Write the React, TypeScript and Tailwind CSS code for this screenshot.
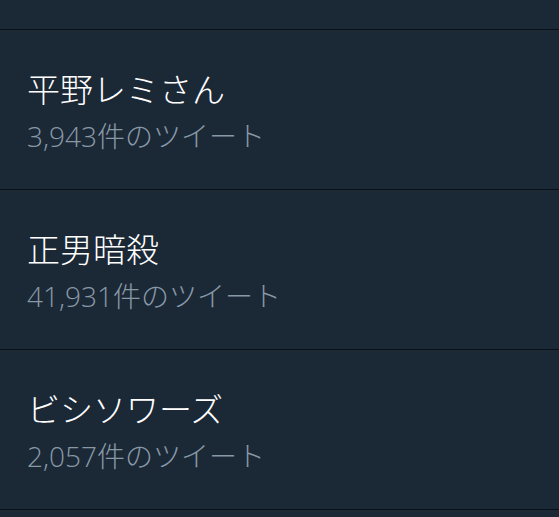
import React from 'react';

interface TrendItem {
  name: string;
  count: string;
}

const trends: TrendItem[] = [
  { name: '平野レミさん', count: '3,943件のツイート' },
  { name: '正男暗殺', count: '41,931件のツイート' },
  { name: 'ビシソワーズ', count: '2,057件のツイート' },
];

const App = () => {
  return (
    <div
      className="w-[559px] h-[517px] overflow-hidden bg-[#1b2836]"
      style={{ fontFamily: '"Noto Sans CJK JP", "Noto Sans", sans-serif' }}
    >
      {/* tail of the previous row */}
      <div className="h-[30px] border-b border-[#0b1117]" />
      {trends.map((t) => (
        <div
          key={t.name}
          className="h-[160px] border-b border-[#0b1117] flex flex-col pt-[38px] pl-[27px]"
        >
          <p className="text-[33px] leading-[40px] font-light text-white">{t.name}</p>
          <p
            className="text-[28px] leading-[36px] mt-[10px] font-light text-[#8899a6]"
            style={{ fontFamily: '"Open Sans", "Noto Sans CJK JP", sans-serif' }}
          >
            {t.count}
          </p>
        </div>
      ))}
    </div>
  );
};

export default App;
